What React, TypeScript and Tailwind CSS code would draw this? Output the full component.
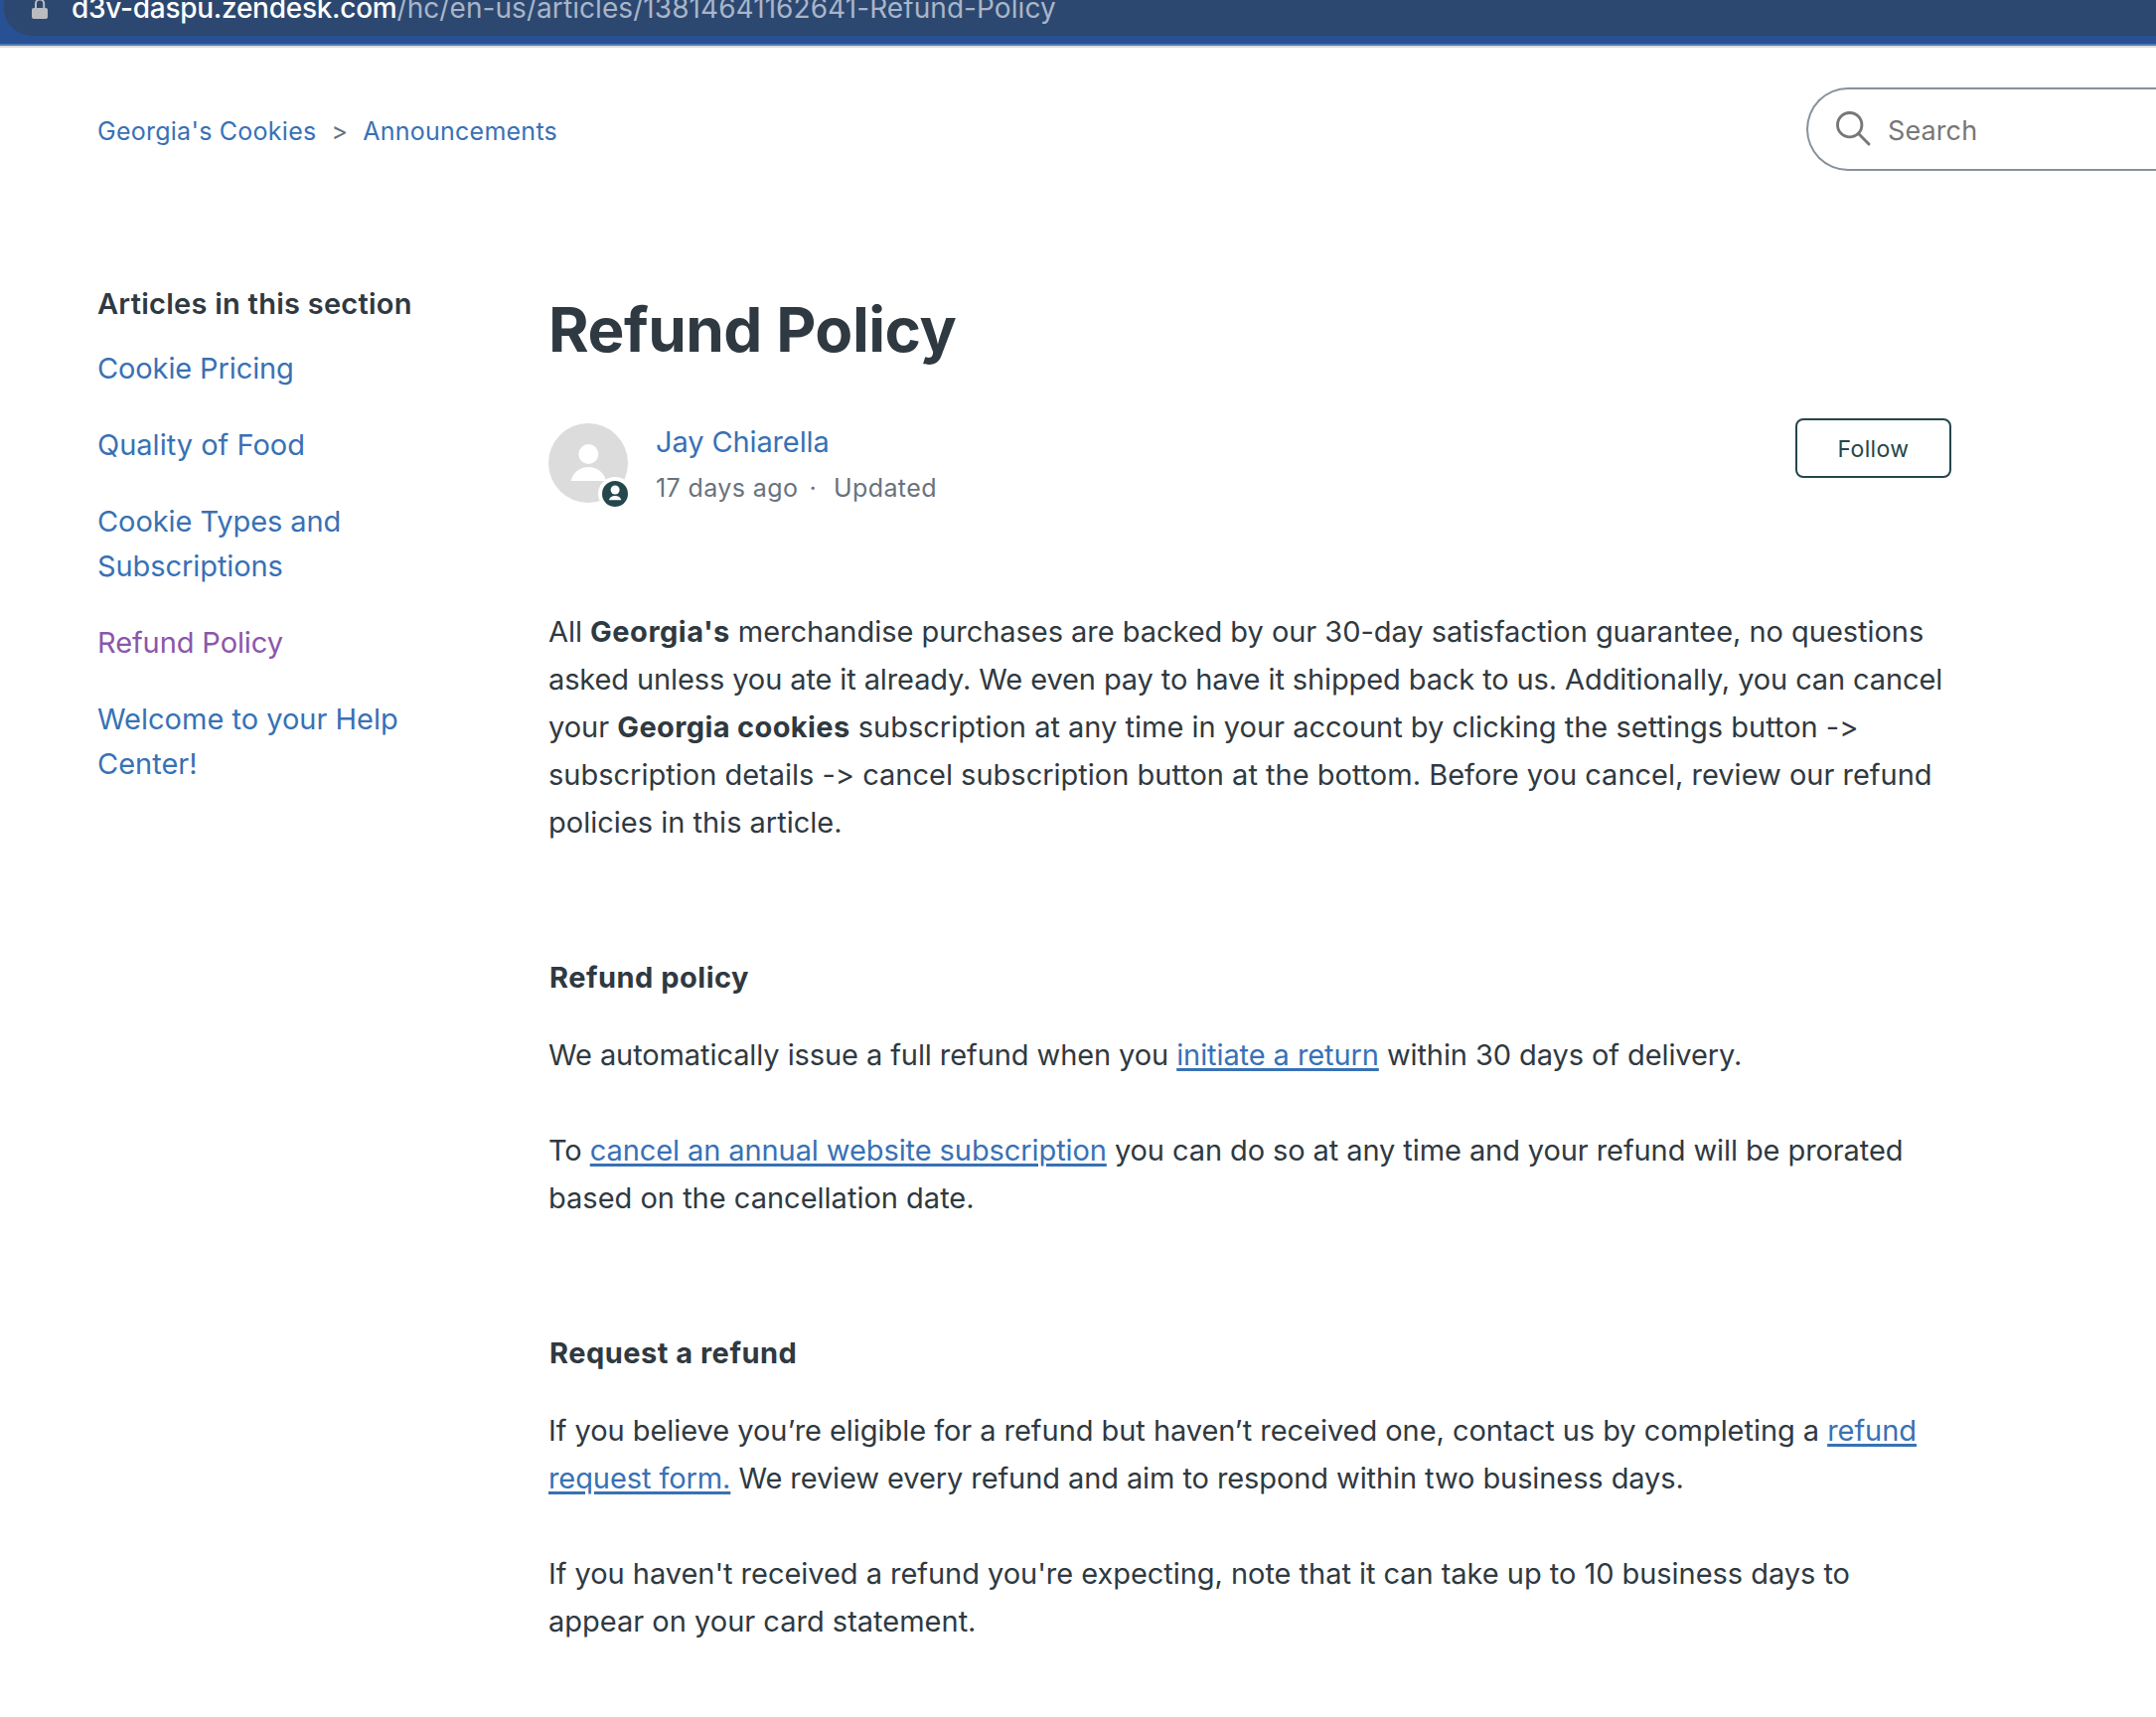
import React from "react";

const sidebarLinks = [
  { lines: ["Cookie Pricing"], color: "text-[#3871b5] tracking-[-0.12px]" },
  { lines: ["Quality of Food"], color: "text-[#3871b5]" },
  { lines: ["Cookie Types and", "Subscriptions"], color: "text-[#3871b5] tracking-[-0.08px]" },
  { lines: ["Refund Policy"], color: "text-[#8b56ab] tracking-[-0.1px]" },
  { lines: ["Welcome to your Help", "Center!"], color: "text-[#3871b5]" },
];

function Line({ children, track = "" }: { children: React.ReactNode; track?: string }) {
  return <span className={`block w-max whitespace-pre ${track}`}>{children}</span>;
}

function Link({ children }: { children: React.ReactNode }) {
  return (
    <a className="text-[#3871b5] underline decoration-[3px] underline-offset-[3px]">{children}</a>
  );
}

function AddressBar() {
  return (
    <div className="h-12 overflow-hidden border-b-2 border-[#dcdcdc] bg-[#285094]">
      <div className="h-[46px] border-b-2 border-[#5079b0]">
        <div className="ml-1 flex h-9 items-start rounded-bl-[28px] bg-[#2c4870] pl-7">
          <svg className="h-5 w-4 shrink-0" viewBox="0 0 16 20">
            <rect x="0" y="8" width="16" height="11" rx="2" fill="#b9bbbf" />
            <path d="M4 9V3.500a4.100 4.100 0 0 1 8.200 0V9" fill="none" stroke="#b9bbbf" strokeWidth="2" />
          </svg>
          <div className="-mt-[10px] ml-6 whitespace-pre text-[28px] leading-9 text-[#a9b5c8]">
            <span className="font-medium tracking-[-0.27px] text-white">d3v-daspu.zendesk.com</span>
            <span className="tracking-[0.07px]">/hc/en-us/articles/13814641162641-Refund-Policy</span>
          </div>
        </div>
      </div>
    </div>
  );
}

function Avatar() {
  return (
    <svg className="h-[90px] w-[90px] shrink-0" viewBox="0 0 90 90">
      <circle cx="40" cy="40" r="40" fill="#dcdcdc" />
      <circle cx="40.300" cy="31" r="10" fill="#fff" />
      <path d="M22.600 58c2-8.500 9.200-14 17.700-14S56 49.500 58 58z" fill="#fff" />
      <circle cx="67" cy="71" r="17" fill="#fff" />
      <circle cx="67" cy="71" r="13" fill="#23474b" />
      <circle cx="67.100" cy="67" r="4.500" fill="#fff" />
      <path d="M60.800 77.300c.8-2.800 3.200-4.300 6.300-4.300s5.500 1.500 6.300 4.300z" fill="#fff" />
    </svg>
  );
}

export default function App() {
  return (
    <div className="h-[1728px] w-[2170px] overflow-hidden bg-white font-['Inter',sans-serif] text-[29px] text-[#2f3941] [font-feature-settings:'calt'_0]">
      <AddressBar />
      <header className="flex h-[124px] justify-between pt-10">
        <nav className="flex h-[84px] items-center pl-[98px] pt-[5px] text-[25px] tracking-[0.25px] text-[#3871b5]">
          <a>Georgia's Cookies</a>
          <span className="mx-[15px] text-[#68737d]">&gt;</span>
          <a>Announcements</a>
        </nav>
        <div className="flex h-[84px] w-[352px] items-center rounded-l-full border-2 border-r-0 border-[#87929d] pl-7 text-[27px] text-[#777]">
          <svg className="mr-4 h-9 w-9" viewBox="0 0 36 36" fill="none" stroke="#777" strokeWidth="2.900">
            <circle cx="13.700" cy="13.700" r="12.200" />
            <path d="M22.300 22.300 33 33" strokeLinecap="round" />
          </svg>
          <span className="pt-[5px] tracking-[0.1px]">Search</span>
        </div>
      </header>

      <div className="flex">
        <aside className="w-[552px] pl-[98px] pt-[111px] leading-[45px]">
          <h3 className="mb-5 w-max font-semibold tracking-[0.26px]">Articles in this section</h3>
          <ul className="flex flex-col gap-8">
            {sidebarLinks.map((item) => (
              <li key={item.lines[0]} className={item.color}>
                {item.lines.map((line) => (
                  <Line key={line}>{line}</Line>
                ))}
              </li>
            ))}
          </ul>
        </aside>

        <main className="w-[1412px] pt-[120px]">
          <h1 className="h-20 w-max text-[62px] font-bold leading-20 tracking-[-0.48px]">Refund Policy</h1>
          <div className="mt-[49px] flex h-[90px]">
            <div className="flex pt-[5px]">
              <Avatar />
              <div className="ml-[18px] pt-px">
                <div className="w-max leading-9 tracking-[-0.12px] text-[#3871b5]">Jay Chiarella</div>
                <div className="mt-[9px] flex h-10 items-center text-[25px] tracking-[0.4px] text-[#68737d]">
                  <span>17 days ago</span>
                  <span className="ml-[11px] mr-[17px]">·</span>
                  <span>Updated</span>
                </div>
              </div>
            </div>
            <button className="ml-auto h-[60px] w-[157px] rounded-lg border-2 border-[#23474b] pt-[3px] text-[23px] tracking-[0.4px] text-[#23474b]">
              Follow
            </button>
          </div>

          <article className="mt-[101px] leading-[48px]">
            <p>
              <Line track="tracking-[-0.04px]">All <b className="tracking-[0.5px]">Georgia's</b> merchandise purchases are backed by our 30-day satisfaction guarantee, no questions</Line>
              <Line track="tracking-[-0.11px]">asked unless you ate it already. We even pay to have it shipped back to us. Additionally, you can cancel</Line>
              <Line>your <b className="tracking-[0.37px]">Georgia cookies</b> subscription at any time in your account by clicking the settings button -&gt;</Line>
              <Line>subscription details -&gt; cancel subscription button at the bottom. Before you cancel, review our refund</Line>
              <Line>policies in this article.</Line>
            </p>
            <h4 className="mt-[108px] w-max pl-px font-bold tracking-[0.5px]">Refund policy</h4>
            <p className="mt-[30px]">
              <Line track="tracking-[-0.09px]">We automatically issue a full refund when you <Link>initiate a return</Link> within 30 days of delivery.</Line>
            </p>
            <p className="mt-12">
              <Line track="tracking-[-0.09px]">To <Link>cancel an annual website subscription</Link> you can do so at any time and your refund will be prorated</Line>
              <Line>based on the cancellation date.</Line>
            </p>
            <h4 className="mt-[108px] w-max pl-px font-bold tracking-[0.5px]">Request a refund</h4>
            <p className="mt-[30px]">
              <Line track="tracking-[-0.05px]">If you believe you’re eligible for a refund but haven’t received one, contact us by completing a <Link>refund</Link></Line>
              <Line track="tracking-[-0.09px]"><Link>request form.</Link> We review every refund and aim to respond within two business days.</Line>
            </p>
            <p className="mt-12">
              <Line track="tracking-[-0.04px]">If you haven't received a refund you're expecting, note that it can take up to 10 business days to</Line>
              <Line>appear on your card statement.</Line>
            </p>
          </article>
        </main>
      </div>
    </div>
  );
}
